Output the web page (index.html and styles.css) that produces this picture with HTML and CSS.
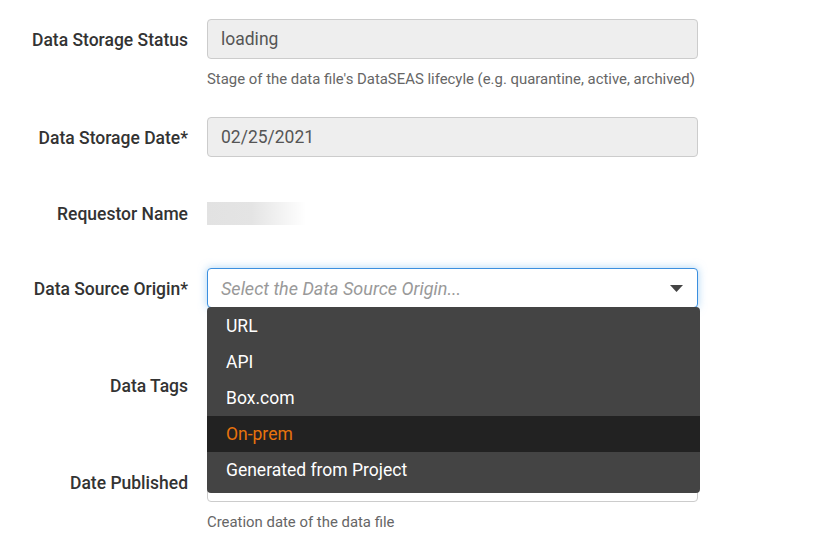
FILE: index.html
```html
<!DOCTYPE html>
<html>
<head>
<meta charset="utf-8">
<link rel="stylesheet" href="styles.css">
</head>
<body>
<form class="form">
  <div class="group">
    <label class="label">Data Storage Status</label>
    <div class="field">
      <div class="input readonly">loading</div>
      <p class="help">Stage of the data file's DataSEAS lifecyle (e.g. quarantine, active, archived)</p>
    </div>
  </div>
  <div class="group">
    <label class="label">Data Storage Date*</label>
    <div class="field">
      <div class="input readonly">02/25/2021</div>
    </div>
  </div>
  <div class="group group-static">
    <label class="label">Requestor Name</label>
    <div class="field">
      <div class="static"><span class="redacted"></span></div>
    </div>
  </div>
  <div class="group group-covered">
    <label class="label">Data Source Origin*</label>
    <div class="field">
      <div class="select-wrap">
        <div class="input select focused">
          <span class="placeholder">Select the Data Source Origin...</span>
          <svg class="caret" width="13" height="7" viewBox="0 0 13 7"><path d="M0 0h13L6.5 7z" fill="#444"/></svg>
        </div>
        <ul class="menu">
          <li class="item">URL</li>
          <li class="item">API</li>
          <li class="item">Box.com</li>
          <li class="item active">On-prem</li>
          <li class="item">Generated from Project</li>
        </ul>
      </div>
    </div>
  </div>
  <div class="group group-covered">
    <label class="label">Data Tags</label>
    <div class="field">
      <div class="input"></div>
    </div>
  </div>
  <div class="group">
    <label class="label">Date Published</label>
    <div class="field">
      <div class="input"></div>
      <p class="help">Creation date of the data file</p>
    </div>
  </div>
</form>
</body>
</html>
```

FILE: styles.css
```css
* { box-sizing: border-box; }
html, body { margin: 0; padding: 0; background: #fff; }
body {
  font-family: Roboto, "Liberation Sans", Arial, sans-serif;
  font-size: 16px;
  color: #333;
  overflow: hidden;
}
.form {
  display: flex;
  flex-direction: column;
  padding-top: 19px;
}
.group {
  display: flex;
  align-items: flex-start;
  gap: 19px;
  margin-bottom: 28px;
}
.group-static { margin-top: 8px; margin-bottom: 35px; }
.group-covered { margin-bottom: 57px; }
.label {
  width: 188px;
  flex: none;
  text-align: right;
  font-weight: 500;
  font-size: 17.5px;
  line-height: 20px;
  padding-top: 11px;
  color: #333;
}
.field { width: 491px; flex: none; }
.input {
  height: 40px;
  border: 1px solid #ccc;
  border-radius: 4px;
  background: #fff;
  padding: 0 13px;
  display: flex;
  align-items: center;
  font-size: 17.5px;
  color: #555;
}
.readonly { background: #eee; }
.help {
  margin: 10px 0 0;
  font-size: 14.9px;
  line-height: 20px;
  color: #666;
  white-space: nowrap;
}
.static { height: 40px; display: flex; align-items: center; }
.redacted {
  display: block;
  width: 99px;
  height: 23px;
  margin-top: 1px;
  background: linear-gradient(to right, #e2e2e2 0%, #e4e4e4 45%, #fafafa 90%, #fff 100%);
}
.select-wrap { position: relative; }
.select { justify-content: space-between; }
.focused {
  border-color: #3b8fdf;
  box-shadow: 0 0 8px rgba(102, 175, 233, 0.55);
}
.placeholder { color: #999; font-style: italic; font-size: 18px; }
.caret { margin-right: 1px; }
.menu {
  position: absolute;
  left: 0;
  top: 39px;
  width: 493px;
  margin: 0;
  padding: 1px 0 5px;
  list-style: none;
  background: #444;
  border-radius: 4px;
  z-index: 2;
}
.item {
  height: 36px;
  line-height: 36px;
  padding-left: 19px;
  color: #fff;
  font-size: 17.5px;
  font-weight: 400;
}
.item.active { background: #222; color: #e8730c; }
```
